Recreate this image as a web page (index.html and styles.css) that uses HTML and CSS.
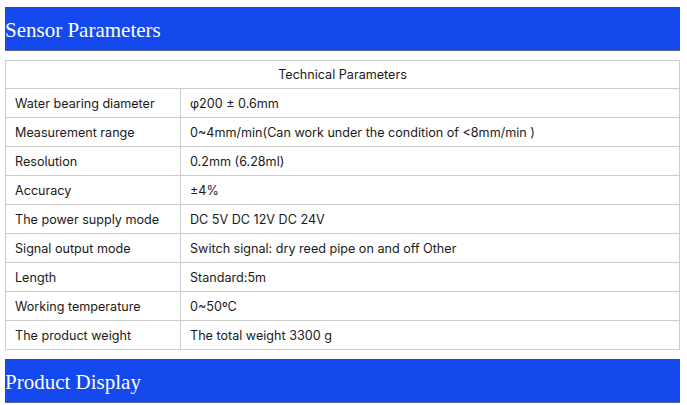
FILE: index.html
```html
<!DOCTYPE html>
<html>
<head>
<meta charset="utf-8">
<link rel="stylesheet" href="styles.css">
</head>
<body>
<div class="page">
  <h2 class="bar">Sensor Parameters</h2>
  <table class="params">
    <tr><td colspan="2" class="head">Technical Parameters</td></tr>
    <tr><td class="k">Water bearing diameter</td><td>φ200 ± 0.6mm</td></tr>
    <tr><td class="k">Measurement range</td><td>0~4mm/min(Can work under the condition of &lt;8mm/min )</td></tr>
    <tr><td class="k">Resolution</td><td>0.2mm (6.28ml)</td></tr>
    <tr><td class="k">Accuracy</td><td>±4%</td></tr>
    <tr><td class="k">The power supply mode</td><td>DC 5V DC 12V DC 24V</td></tr>
    <tr><td class="k">Signal output mode</td><td>Switch signal: dry reed pipe on and off Other</td></tr>
    <tr><td class="k">Length</td><td>Standard:5m</td></tr>
    <tr><td class="k">Working temperature</td><td>0~50ºC</td></tr>
    <tr><td class="k">The product weight</td><td>The total weight 3300 g</td></tr>
  </table>
  <h2 class="bar">Product Display</h2>
</div>
</body>
</html>
```
FILE: styles.css
```css
html, body {
  margin: 0;
  padding: 0;
  background: #fff;
}
.page {
  padding: 7px 7px 0 5px;
  width: 675px;
}
.bar {
  margin: 0;
  background: #1449ee;
  color: #fff;
  font-family: "Liberation Serif", serif;
  font-weight: normal;
  font-size: 21px;
  height: 43px;
  line-height: 46px;
  border-bottom: 1px solid #5a6a8a;
  padding: 0;
}
.params {
  margin: 9px 0 9px 0;
  width: 675px;
  border-collapse: collapse;
  font-family: Inter, "Noto Sans", sans-serif;
  font-size: 12.6px;
  color: #1a1a1a;
}
.params td {
  border: 1px solid #ccc;
  height: 29px;
  padding: 0 9px;
  box-sizing: border-box;
}
.params td.head {
  height: 28px;
  text-align: center;
}
.params td.k {
  width: 175px;
}
```
